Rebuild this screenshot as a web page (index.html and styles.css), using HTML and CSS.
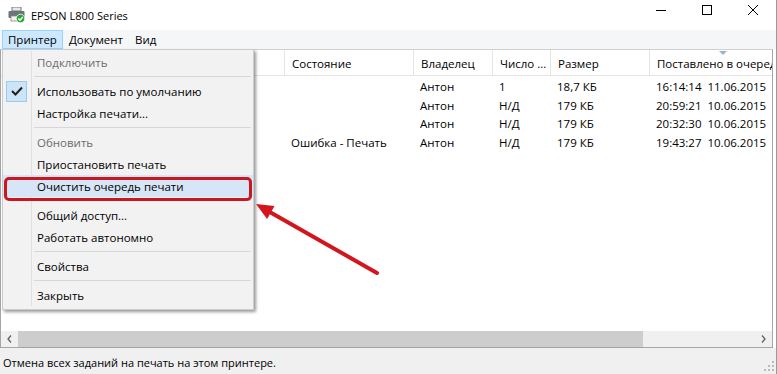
FILE: index.html
```html
<!DOCTYPE html>
<html lang="ru">
<head>
    <meta charset="UTF-8">
    <title>EPSON L800 Series</title>
    <link rel="stylesheet" href="styles.css">
</head>
<body>
    <div class="window">
        <div class="titlebar">
            <svg class="app-icon" width="18" height="16" viewBox="0 0 18 16">
                <rect x="4" y="0" width="9" height="4" fill="#e8e8e8" stroke="#777" stroke-width="1"/>
                <rect x="0.5" y="4" width="16" height="7" rx="1" fill="#6d7378"/>
                <rect x="3" y="9" width="10" height="5" fill="#f2f2f2" stroke="#888" stroke-width="0.8"/>
                <circle cx="12.5" cy="11.5" r="4.3" fill="#2fa33b" stroke="#fff" stroke-width="0.8"/>
                <path d="M10.3 11.6 L12 13.2 L14.8 10" fill="none" stroke="#fff" stroke-width="1.4"/>
            </svg>
            <span class="title">EPSON L800 Series</span>
            <div class="controls">
                <div class="ctl">
                    <svg width="10" height="10" viewBox="0 0 10 10"><path d="M0 5.5 H10" stroke="#000" stroke-width="1"/></svg>
                </div>
                <div class="ctl">
                    <svg width="10" height="10" viewBox="0 0 10 10"><rect x="0.5" y="0.5" width="9" height="9" fill="none" stroke="#000" stroke-width="1"/></svg>
                </div>
                <div class="ctl">
                    <svg width="10" height="10" viewBox="0 0 10 10"><path d="M0 0 L10 10 M10 0 L0 10" stroke="#000" stroke-width="1"/></svg>
                </div>
            </div>
        </div>

        <div class="menubar">
            <div class="menu-item active">Принтер</div>
            <div class="menu-item">Документ</div>
            <div class="menu-item">Вид</div>
        </div>

        <div class="list">
            <div class="header row-grid">
                <div class="col"></div>
                <div class="col">Состояние</div>
                <div class="col">Владелец</div>
                <div class="col">Число ...</div>
                <div class="col">Размер</div>
                <div class="col last">Поставлено в очередь</div>
                <svg class="sort-mark" width="8" height="4" viewBox="0 0 8 4"><polygon points="0,0 8,0 4,4" fill="#97b4c8"/></svg>
            </div>
            <div class="rows">
                <div class="row row-grid">
                    <div class="cell"></div>
                    <div class="cell"></div>
                    <div class="cell">Антон</div>
                    <div class="cell">1</div>
                    <div class="cell">18,7 КБ</div>
                    <div class="cell date">16:14:14  11.06.2015</div>
                </div>
                <div class="row row-grid">
                    <div class="cell"></div>
                    <div class="cell"></div>
                    <div class="cell">Антон</div>
                    <div class="cell">Н/Д</div>
                    <div class="cell">179 КБ</div>
                    <div class="cell date">20:59:21  10.06.2015</div>
                </div>
                <div class="row row-grid">
                    <div class="cell"></div>
                    <div class="cell"></div>
                    <div class="cell">Антон</div>
                    <div class="cell">Н/Д</div>
                    <div class="cell">179 КБ</div>
                    <div class="cell date">20:32:30  10.06.2015</div>
                </div>
                <div class="row row-grid">
                    <div class="cell"></div>
                    <div class="cell">Ошибка - Печать</div>
                    <div class="cell">Антон</div>
                    <div class="cell">Н/Д</div>
                    <div class="cell">179 КБ</div>
                    <div class="cell date">19:43:27  10.06.2015</div>
                </div>
            </div>
            <div class="hscroll">
                <div class="sb-arrow">
                    <svg width="5" height="8" viewBox="0 0 5 8"><path d="M4 0.5 L1 4 L4 7.5" fill="none" stroke="#606060" stroke-width="1.3"/></svg>
                </div>
                <div class="thumb"></div>
                <div class="track"></div>
                <div class="sb-arrow">
                    <svg width="5" height="8" viewBox="0 0 5 8"><path d="M1 0.5 L4 4 L1 7.5" fill="none" stroke="#606060" stroke-width="1.3"/></svg>
                </div>
            </div>
        </div>

        <div class="statusbar">
            <span class="status-text">Отмена всех заданий на печать на этом принтере.</span>
            <svg class="grip" width="10" height="10" viewBox="0 0 10 10">
                <rect x="8" y="0" width="2" height="2" fill="#bbb"/>
                <rect x="4" y="4" width="2" height="2" fill="#bbb"/>
                <rect x="8" y="4" width="2" height="2" fill="#bbb"/>
                <rect x="0" y="8" width="2" height="2" fill="#bbb"/>
                <rect x="4" y="8" width="2" height="2" fill="#bbb"/>
                <rect x="8" y="8" width="2" height="2" fill="#bbb"/>
            </svg>
        </div>

        <!-- dropdown of the "Принтер" menu -->
        <div class="dropdown">
            <div class="item disabled"><span class="gutter"></span><span class="label">Подключить</span></div>
            <div class="sep"><span class="gutter"></span><span class="line"></span></div>
            <div class="item">
                <span class="gutter">
                    <span class="check">
                        <svg width="12" height="10" viewBox="0 0 12 10"><path d="M1 5 L4.5 8.5 L11 1.5" fill="none" stroke="#1e1e1e" stroke-width="2"/></svg>
                    </span>
                </span>
                <span class="label">Использовать по умолчанию</span>
            </div>
            <div class="item"><span class="gutter"></span><span class="label">Настройка печати...</span></div>
            <div class="sep"><span class="gutter"></span><span class="line"></span></div>
            <div class="item disabled"><span class="gutter"></span><span class="label">Обновить</span></div>
            <div class="item"><span class="gutter"></span><span class="label">Приостановить печать</span></div>
            <div class="item hover"><span class="gutter"></span><span class="label">Очистить очередь печати</span></div>
            <div class="sep"><span class="gutter"></span><span class="line"></span></div>
            <div class="item"><span class="gutter"></span><span class="label">Общий доступ...</span></div>
            <div class="item"><span class="gutter"></span><span class="label">Работать автономно</span></div>
            <div class="sep"><span class="gutter"></span><span class="line"></span></div>
            <div class="item"><span class="gutter"></span><span class="label">Свойства</span></div>
            <div class="sep"><span class="gutter"></span><span class="line"></span></div>
            <div class="item"><span class="gutter"></span><span class="label">Закрыть</span></div>
        </div>

        <!-- annotation drawn over the screenshot -->
        <div class="callout"></div>
        <svg class="arrow" width="777" height="374" viewBox="0 0 777 374">
            <path d="M377 273 L268 211" stroke="#d3161d" stroke-width="4" stroke-linecap="round"/>
            <polygon points="256,204 274.5,205.9 267.1,218.9" fill="#d3161d"/>
        </svg>
    </div>
</body>
</html>
```

FILE: styles.css
```css
* {
    box-sizing: border-box;
}
body {
    margin: 0;
    width: 777px;
    height: 374px;
    overflow: hidden;
    background: #fff;
    font-family: "Open Sans", "Noto Sans", sans-serif;
    font-size: 11.5px;
    color: #000;
}
.window {
    position: relative;
    height: 374px;
    display: flex;
    flex-direction: column;
    border-right: 1px solid #9a9a9a;
}

/* title bar */
.titlebar {
    height: 30px;
    display: flex;
    align-items: center;
    padding-left: 8px;
    flex-shrink: 0;
}
.app-icon {
    margin-right: 5px;
}
.title {
    flex: 1;
    font-size: 11px;
}
.controls {
    display: flex;
    align-self: stretch;
}
.ctl {
    width: 46px;
    display: flex;
    align-items: center;
    justify-content: center;
    padding-bottom: 10px;
}

/* menu bar */
.menubar {
    height: 19px;
    display: flex;
    background: #f5f6f7;
    padding-left: 2px;
    flex-shrink: 0;
}
.menu-item {
    padding: 0 5px;
    line-height: 18px;
    border: 1px solid transparent;
}
.menu-item.active {
    background: #cce8ff;
    border-color: #99d1ff;
}

/* job list */
.list {
    flex: 1;
    display: flex;
    flex-direction: column;
    margin: 0 3px 0 0;
    border: 1px solid #a5a5a5;
    border-top-color: #cfcfcf;
    min-height: 0;
}
.row-grid {
    display: grid;
    grid-template-columns: 283px 129px 79px 58px 99px 1fr;
}
.header {
    position: relative;
    height: 26px;
    border-bottom: 1px solid #e5e5e5;
    flex-shrink: 0;
}
.col {
    padding: 2px 0 0 7px;
    line-height: 23px;
    border-left: 1px solid #e5e5e5;
    white-space: nowrap;
    overflow: hidden;
}
.col:first-child {
    border-left: none;
}
.sort-mark {
    position: absolute;
    left: 718px;
    top: 1px;
}
.rows {
    flex: 1;
    padding-top: 2px;
}
.row {
    height: 18.5px;
}
.cell {
    padding-left: 7px;
    line-height: 18.5px;
    white-space: nowrap;
}
.date {
    white-space: pre;
}

/* horizontal scroll bar */
.hscroll {
    height: 16px;
    display: flex;
    background: #f0f0f0;
    flex-shrink: 0;
}
.sb-arrow {
    width: 17px;
    display: flex;
    align-items: center;
    justify-content: center;
}
.thumb {
    width: 625px;
    background: #cdcdcd;
}
.track {
    flex: 1;
}

/* status bar */
.statusbar {
    height: 26px;
    display: flex;
    align-items: center;
    justify-content: space-between;
    background: #f0f0f0;
    padding: 2px 2px 0 3px;
    flex-shrink: 0;
}
.status-text {
    font-size: 11px;
}
.grip {
    align-self: flex-end;
    margin-bottom: 3px;
}

/* dropdown menu */
.dropdown {
    position: absolute;
    left: 2px;
    top: 49px;
    width: 252px;
    background: #f2f2f2;
    border: 1px solid #cccccc;
    box-shadow: 2px 2px 3px rgba(0, 0, 0, 0.4);
    padding: 1px 0 3px;
}
.item {
    height: 22px;
    display: flex;
    align-items: center;
}
.gutter {
    width: 29px;
    align-self: stretch;
    border-right: 1px solid #e0e0e0;
    display: flex;
    align-items: center;
}
.label {
    padding-left: 5px;
}
.item.disabled .label {
    color: #6d6d6d;
}
.item.hover {
    background: #d6e6f6;
}
.item.hover .gutter {
    border-right-color: transparent;
}
.check {
    width: 21px;
    height: 21px;
    margin-left: 3px;
    background: #cce4f7;
    border: 1px solid #9ccaef;
    display: flex;
    align-items: center;
    justify-content: center;
}
.sep {
    height: 7px;
    display: flex;
}
.sep .line {
    flex: 1;
    margin: 3px 2px 0 2px;
    height: 1px;
    background: #d7d7d7;
}

/* red annotation */
.callout {
    position: absolute;
    left: 4px;
    top: 177px;
    width: 248px;
    height: 24px;
    border: 3px solid #c8171e;
    border-radius: 5px;
}
.arrow {
    position: absolute;
    left: 0;
    top: 0;
    pointer-events: none;
}
```
